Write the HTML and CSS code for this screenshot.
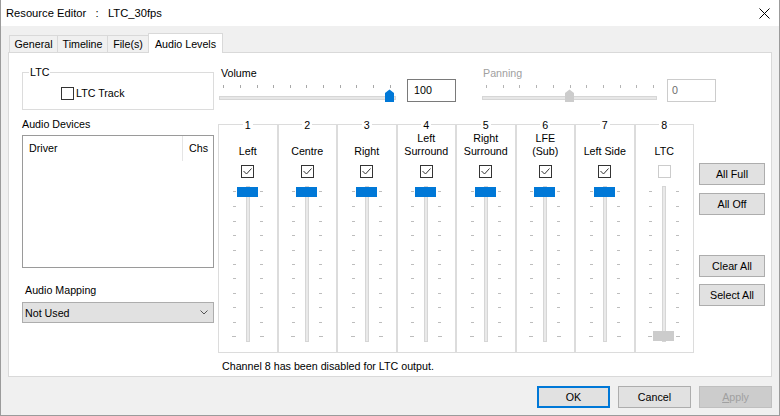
FILE: index.html
```html
<!DOCTYPE html>
<html lang="en">
<head>
    <meta charset="UTF-8">
    <title>Resource Editor : LTC_30fps</title>
    <link rel="stylesheet" href="styles.css">
</head>
<body>
    <svg class="defs" width="0" height="0">
        <defs>
            <g id="vtrack">
                <g fill="#bdbdbd">
                    <rect x="5" y="7" width="3" height="1"/><rect x="32" y="7" width="3" height="1"/>
                    <rect x="5" y="22" width="3" height="1"/><rect x="32" y="22" width="3" height="1"/>
                    <rect x="5" y="37" width="3" height="1"/><rect x="32" y="37" width="3" height="1"/>
                    <rect x="5" y="51" width="3" height="1"/><rect x="32" y="51" width="3" height="1"/>
                    <rect x="5" y="66" width="3" height="1"/><rect x="32" y="66" width="3" height="1"/>
                    <rect x="5" y="80" width="3" height="1"/><rect x="32" y="80" width="3" height="1"/>
                    <rect x="5" y="94" width="3" height="1"/><rect x="32" y="94" width="3" height="1"/>
                    <rect x="5" y="109" width="3" height="1"/><rect x="32" y="109" width="3" height="1"/>
                    <rect x="5" y="123" width="3" height="1"/><rect x="32" y="123" width="3" height="1"/>
                    <rect x="5" y="138" width="3" height="1"/><rect x="32" y="138" width="3" height="1"/>
                    <rect x="4" y="152" width="4" height="1"/><rect x="32" y="152" width="4" height="1"/>
                </g>
                <rect x="18" y="2" width="4" height="156" fill="#d6d6d6"/>
                <rect x="19" y="3" width="2" height="154" fill="#e9e9e9"/>
            </g>
            <path id="tick" d="M1.5 5 L4.5 8 L9.5 2.5" fill="none" stroke="#333" stroke-width="1"/>
        </defs>
    </svg>

    <div class="window">
        <div class="titlebar">
            <span class="title">Resource Editor   :   LTC_30fps</span>
            <svg class="close" width="11" height="11" viewBox="0 0 11 11">
                <path d="M0.5 0.5 L10.5 10.5 M10.5 0.5 L0.5 10.5" stroke="#000" stroke-width="1"/>
            </svg>
        </div>

        <div class="tabs">
            <div class="tab tab-general">General</div>
            <div class="tab tab-timeline">Timeline</div>
            <div class="tab tab-files">File(s)</div>
            <div class="tab tab-audio active">Audio Levels</div>
        </div>

        <div class="panel">
            <div class="left">
                <div class="group">
                    <div class="group-title">LTC</div>
                    <div class="check-row"><span class="checkbox"></span>LTC Track</div>
                </div>
                <div class="devices-label">Audio Devices</div>
                <div class="listbox">
                    <div class="list-header">
                        <div class="col-driver">Driver</div>
                        <div class="col-chs">Chs</div>
                    </div>
                </div>
                <div class="mapping-label">Audio Mapping</div>
                <div class="select">
                    <span>Not Used</span>
                    <svg width="8" height="5" viewBox="0 0 8 5"><path d="M0.5 0.5 L4 4 L7.5 0.5" fill="none" stroke="#555" stroke-width="1"/></svg>
                </div>
            </div>

            <div class="right">
                <div class="sliders">
                    <div class="hslider">
                        <div class="hslider-main">
                            <div class="hslider-label">Volume</div>
                            <svg width="184" height="22" viewBox="0 0 184 22">
                                <g fill="#a8a8a8">
                                    <rect x="5" y="4" width="1" height="3"/><rect x="22" y="4" width="1" height="3"/>
                                    <rect x="39" y="4" width="1" height="3"/><rect x="55" y="4" width="1" height="3"/>
                                    <rect x="72" y="4" width="1" height="3"/><rect x="88" y="4" width="1" height="3"/>
                                    <rect x="105" y="4" width="1" height="3"/><rect x="122" y="4" width="1" height="3"/>
                                    <rect x="138" y="4" width="1" height="3"/><rect x="155" y="4" width="1" height="3"/>
                                    <rect x="172" y="4" width="1" height="3"/>
                                </g>
                                <rect x="1.5" y="15.5" width="176" height="3" fill="#e7e7e7" stroke="#d6d6d6"/>
                                <polygon points="167,12 171.5,8.5 176,12 176,21 167,21" fill="#0078d7"/>
                            </svg>
                        </div>
                        <div class="textbox">100</div>
                    </div>
                    <div class="hslider disabled">
                        <div class="hslider-main">
                            <div class="hslider-label">Panning</div>
                            <svg width="184" height="22" viewBox="0 0 184 22">
                                <g fill="#b4b4b4">
                                    <rect x="6" y="4" width="1" height="3"/><rect x="23" y="4" width="1" height="3"/>
                                    <rect x="39" y="4" width="1" height="3"/><rect x="56" y="4" width="1" height="3"/>
                                    <rect x="73" y="4" width="1" height="3"/><rect x="90" y="4" width="1" height="3"/>
                                    <rect x="106" y="4" width="1" height="3"/><rect x="123" y="4" width="1" height="3"/>
                                    <rect x="140" y="4" width="1" height="3"/><rect x="156" y="4" width="1" height="3"/>
                                    <rect x="173" y="4" width="1" height="3"/>
                                </g>
                                <rect x="2.5" y="15.5" width="174" height="3" fill="#e7e7e7" stroke="#d6d6d6"/>
                                <polygon points="85,12 89.5,8.5 94,12 94,21 85,21" fill="#cccccc"/>
                            </svg>
                        </div>
                        <div class="textbox">0</div>
                    </div>
                </div>

                <div class="mixer">
                    <div class="channels">
                        <div class="channel">
                            <div class="ch-num">1</div>
                            <div class="ch-name"><div>Left</div></div>
                            <span class="checkbox"><svg width="11" height="11"><use href="#tick"/></svg></span>
                            <svg class="vslider" width="40" height="160"><use href="#vtrack"/><rect class="thumb" x="9" y="3" width="21" height="10"/></svg>
                        </div>
                        <div class="channel">
                            <div class="ch-num">2</div>
                            <div class="ch-name"><div>Centre</div></div>
                            <span class="checkbox"><svg width="11" height="11"><use href="#tick"/></svg></span>
                            <svg class="vslider" width="40" height="160"><use href="#vtrack"/><rect class="thumb" x="9" y="3" width="21" height="10"/></svg>
                        </div>
                        <div class="channel">
                            <div class="ch-num">3</div>
                            <div class="ch-name"><div>Right</div></div>
                            <span class="checkbox"><svg width="11" height="11"><use href="#tick"/></svg></span>
                            <svg class="vslider" width="40" height="160"><use href="#vtrack"/><rect class="thumb" x="9" y="3" width="21" height="10"/></svg>
                        </div>
                        <div class="channel">
                            <div class="ch-num">4</div>
                            <div class="ch-name"><div>Left<br>Surround</div></div>
                            <span class="checkbox"><svg width="11" height="11"><use href="#tick"/></svg></span>
                            <svg class="vslider" width="40" height="160"><use href="#vtrack"/><rect class="thumb" x="9" y="3" width="21" height="10"/></svg>
                        </div>
                        <div class="channel">
                            <div class="ch-num">5</div>
                            <div class="ch-name"><div>Right<br>Surround</div></div>
                            <span class="checkbox"><svg width="11" height="11"><use href="#tick"/></svg></span>
                            <svg class="vslider" width="40" height="160"><use href="#vtrack"/><rect class="thumb" x="9" y="3" width="21" height="10"/></svg>
                        </div>
                        <div class="channel">
                            <div class="ch-num">6</div>
                            <div class="ch-name"><div>LFE<br>(Sub)</div></div>
                            <span class="checkbox"><svg width="11" height="11"><use href="#tick"/></svg></span>
                            <svg class="vslider" width="40" height="160"><use href="#vtrack"/><rect class="thumb" x="9" y="3" width="21" height="10"/></svg>
                        </div>
                        <div class="channel">
                            <div class="ch-num">7</div>
                            <div class="ch-name"><div>Left Side</div></div>
                            <span class="checkbox"><svg width="11" height="11"><use href="#tick"/></svg></span>
                            <svg class="vslider" width="40" height="160"><use href="#vtrack"/><rect class="thumb" x="9" y="3" width="21" height="10"/></svg>
                        </div>
                        <div class="channel">
                            <div class="ch-num">8</div>
                            <div class="ch-name"><div>LTC</div></div>
                            <span class="checkbox off"></span>
                            <svg class="vslider" width="40" height="160"><use href="#vtrack"/><rect class="thumb off" x="9" y="147" width="21" height="10"/></svg>
                        </div>
                    </div>
                    <div class="mixer-buttons">
                        <button class="btn btn-full">All Full</button>
                        <button class="btn btn-off">All Off</button>
                        <button class="btn btn-clear">Clear All</button>
                        <button class="btn btn-select">Select All</button>
                    </div>
                </div>

                <div class="status">Channel 8 has been disabled for LTC output.</div>
            </div>
        </div>

        <div class="footer">
            <button class="btn dlg-btn default">OK</button>
            <button class="btn dlg-btn">Cancel</button>
            <button class="btn dlg-btn disabled"><u>A</u>pply</button>
        </div>
    </div>
</body>
</html>
```

FILE: styles.css
```css
body {
    margin: 0;
    font-family: "Liberation Sans", Arial, sans-serif;
    font-size: 10.7px;
    color: #000;
    background: #f0f0f0;
}
.defs {
    position: absolute;
}
.window {
    width: 780px;
    height: 416px;
    box-sizing: border-box;
    border: 1px solid #9b9b9b;
    border-top: none;
    background: #f0f0f0;
    display: flex;
    flex-direction: column;
}
.titlebar {
    height: 26px;
    background: #fff;
    display: flex;
    align-items: center;
    justify-content: space-between;
    padding: 0 9px 0 5px;
}
.title {
    font-size: 11.2px;
    white-space: pre;
}
.close {
    display: block;
}
.tabs {
    height: 19px;
    padding: 7px 0 0 8px;
    display: flex;
    align-items: flex-end;
}
.tab {
    height: 17px;
    line-height: 17px;
    box-sizing: border-box;
    border: 1px solid #d9d9d9;
    border-bottom: none;
    background: #f0f0f0;
    text-align: center;
    margin-left: -1px;
}
.tab-general {
    width: 49px;
    margin-left: 0;
}
.tab-timeline {
    width: 51px;
}
.tab-files {
    width: 42px;
}
.tab-audio {
    width: 75px;
}
.tab.active {
    height: 20px;
    line-height: 20px;
    background: #fff;
    margin-bottom: -1px;
    position: relative;
    z-index: 1;
}
.panel {
    height: 325px;
    margin: 0 7px;
    box-sizing: border-box;
    border: 1px solid #d9d9d9;
    background: #fff;
    padding: 12px 0 0 13px;
    display: flex;
    gap: 4px;
}

/* left column */
.left {
    width: 192px;
    display: flex;
    flex-direction: column;
}
.group {
    margin-top: 7px;
    height: 38px;
    box-sizing: border-box;
    border: 1px solid #dcdcdc;
}
.group-title {
    width: fit-content;
    margin: -9px 0 0 6px;
    padding: 0 1px;
    line-height: 16px;
    background: #fff;
}
.check-row {
    display: flex;
    align-items: center;
    gap: 2px;
    margin: 5px 0 0 38px;
    line-height: 16px;
}
.checkbox {
    display: block;
    width: 13px;
    height: 13px;
    box-sizing: border-box;
    border: 1px solid #333;
    background: #fff;
}
.checkbox svg {
    display: block;
}
.checkbox.off {
    border-color: #cccccc;
}
.devices-label {
    margin-top: 6px;
    line-height: 16px;
}
.listbox {
    margin-top: 3px;
    height: 133px;
    box-sizing: border-box;
    border: 1px solid #9a9a9a;
}
.list-header {
    display: flex;
    height: 25px;
    line-height: 25px;
}
.col-driver {
    width: 160px;
    padding-left: 6px;
    box-sizing: border-box;
    border-right: 1px solid #e5e5e5;
}
.col-chs {
    padding-left: 6px;
}
.mapping-label {
    margin-top: 14px;
    padding-left: 3px;
    line-height: 16px;
}
.select {
    margin-top: 4px;
    height: 21px;
    box-sizing: border-box;
    border: 1px solid #adadad;
    background: #e1e1e1;
    display: flex;
    align-items: center;
    justify-content: space-between;
    padding: 0 5px 0 2px;
}
.select svg {
    display: block;
}

/* right area */
.right {
    display: flex;
    flex-direction: column;
}
.sliders {
    display: flex;
}
.hslider {
    display: flex;
    align-items: flex-start;
}
.hslider svg {
    display: block;
}
.hslider-label {
    line-height: 16px;
    padding-left: 3px;
}
.textbox {
    margin: 14px 0 0 5px;
    width: 49px;
    height: 23px;
    line-height: 21px;
    box-sizing: border-box;
    border: 1px solid #7a7a7a;
    padding-left: 6px;
}
.hslider.disabled {
    margin-left: 24px;
}
.hslider.disabled .hslider-label {
    color: #a0a0a0;
}
.hslider.disabled .textbox {
    margin-left: 3px;
    border-color: #cccccc;
    color: #6d6d6d;
    padding-left: 4px;
}
.mixer {
    display: flex;
    margin-top: 21px;
}
.channels {
    width: 476px;
    display: grid;
    grid-template-columns: repeat(8, 1fr);
}
.channel {
    height: 229px;
    box-sizing: border-box;
    border: 1px solid #dcdcdc;
    display: flex;
    flex-direction: column;
    align-items: center;
}
.ch-num {
    margin-top: -7px;
    padding: 0 2px;
    line-height: 14px;
    background: #fff;
}
.ch-name {
    height: 26px;
    line-height: 13px;
    display: flex;
    align-items: flex-end;
    text-align: center;
}
.channel .checkbox {
    margin-top: 7px;
}
.vslider {
    display: block;
    margin-top: 6px;
}
.thumb {
    fill: #0078d7;
}
.thumb.off {
    fill: #cccccc;
}
.mixer-buttons {
    margin-left: 5px;
    display: flex;
    flex-direction: column;
}
.btn {
    width: 66px;
    height: 22px;
    padding: 0;
    box-sizing: border-box;
    border: 1px solid #adadad;
    background: #e1e1e1;
    font-family: inherit;
    font-size: inherit;
    color: #000;
}
.btn-full {
    margin-top: 39px;
}
.btn-off {
    margin-top: 8px;
}
.btn-clear {
    margin-top: 40px;
}
.btn-select {
    margin-top: 7px;
}
.status {
    margin-top: 5px;
    padding-left: 4px;
    line-height: 16px;
}

/* dialog buttons */
.footer {
    margin-top: 9px;
    padding-right: 7px;
    display: flex;
    justify-content: flex-end;
    gap: 8px;
}
.dlg-btn {
    width: 73px;
}
.dlg-btn.default {
    border: 2px solid #0078d7;
}
.dlg-btn.disabled {
    background: #cccccc;
    border-color: #bfbfbf;
    color: #a0a0a0;
}
.dlg-btn u {
    text-decoration-thickness: 1px;
}
```
